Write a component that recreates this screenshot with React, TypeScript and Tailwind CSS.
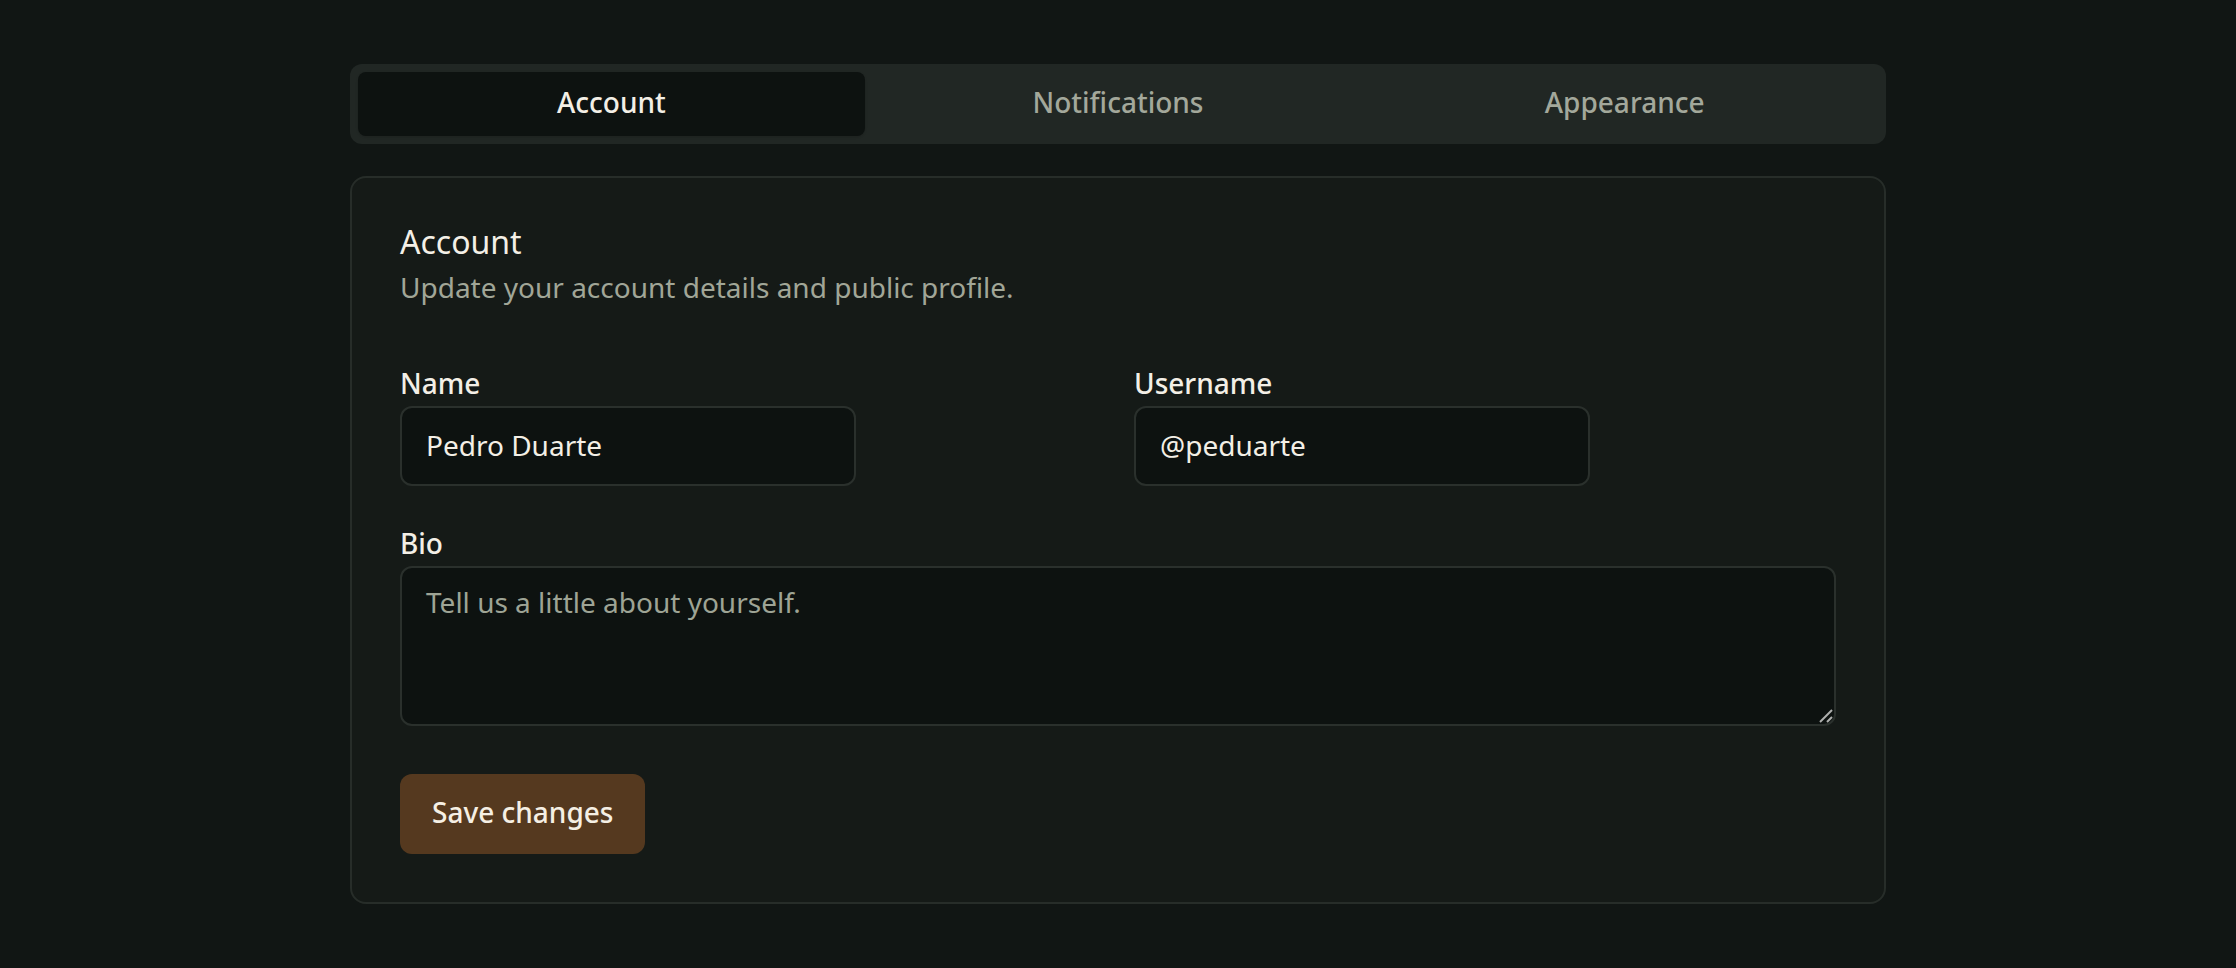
import { useState } from 'react';

const tabs = ['Account', 'Notifications', 'Appearance'];

export default function App() {
  const [active, setActive] = useState('Account');
  const [name, setName] = useState('Pedro Duarte');
  const [username, setUsername] = useState('@peduarte');
  const [bio, setBio] = useState('');

  return (
    <div className="min-h-screen bg-[#111614] pt-[64px] font-['Noto_Sans',sans-serif] text-[#f3efe6]">
      <div className="w-[1536px] mx-auto">
        {/* Tabs */}
        <div className="h-[80px] p-[8px] rounded-[12px] bg-[#212724] grid grid-cols-3">
          {tabs.map((tab) => (
            <button
              key={tab}
              onClick={() => setActive(tab)}
              className={`rounded-[8px] pb-[5px] text-[28px] leading-[40px] font-medium flex items-center justify-center ${
                active === tab
                  ? 'bg-[#0d1210] text-[#f3efe6] shadow-sm'
                  : 'text-[#a3a89b]'
              }`}
            >
              {tab}
            </button>
          ))}
        </div>

        {/* Card */}
        <div className="mt-[32px] border-2 border-[#272d29] rounded-[16px] bg-[#151a17] p-[48px]">
          <h2 className="text-[32px] leading-[32px]">Account</h2>
          <p className="mt-[9px] text-[28px] leading-[40px] text-[#a1a697]">
            Update your account details and public profile.
          </p>

          <div className="mt-[56px] grid grid-cols-2 gap-x-[32px]">
            <div>
              <label className="block text-[28px] leading-[40px] font-medium">Name</label>
              <input
                value={name}
                onChange={(e) => setName(e.target.value)}
                className="mt-[3px] h-[80px] w-[456px] rounded-[12px] border-2 border-[#2a302c] bg-[#0d1210] px-[24px] pb-[3px] text-[28px] text-[#f3efe6] outline-none"
              />
            </div>
            <div>
              <label className="block text-[28px] leading-[40px] font-medium">Username</label>
              <input
                value={username}
                onChange={(e) => setUsername(e.target.value)}
                className="mt-[3px] h-[80px] w-[456px] rounded-[12px] border-2 border-[#2a302c] bg-[#0d1210] px-[24px] pb-[3px] text-[28px] text-[#f3efe6] outline-none"
              />
            </div>
          </div>

          <div className="mt-[37px]">
            <label className="block text-[28px] leading-[40px] font-medium">Bio</label>
            <div className="relative mt-[3px]">
              <textarea
                value={bio}
                onChange={(e) => setBio(e.target.value)}
                placeholder="Tell us a little about yourself."
                className="block h-[160px] w-full resize-none rounded-[12px] border-2 border-[#2a302c] bg-[#0d1210] px-[24px] pt-[14px] pb-[10px] text-[28px] leading-[40px] text-[#f3efe6] placeholder:text-[#9ea495] outline-none"
              />
              {/* resize grip */}
              <svg className="absolute right-[3px] bottom-[3px] pointer-events-none" width="14" height="14" viewBox="0 0 14 14">
                <path d="M1 13 L13 1" stroke="#aeb0ae" strokeWidth="2" />
                <path d="M8 13 L13 8" stroke="#aeb0ae" strokeWidth="2" />
              </svg>
            </div>
          </div>

          <button className="mt-[48px] h-[80px] px-[32px] pb-[5px] rounded-[12px] bg-[#55391f] text-[28px] font-medium text-[#f5efe4]">
            Save changes
          </button>
        </div>
      </div>
    </div>
  );
}
